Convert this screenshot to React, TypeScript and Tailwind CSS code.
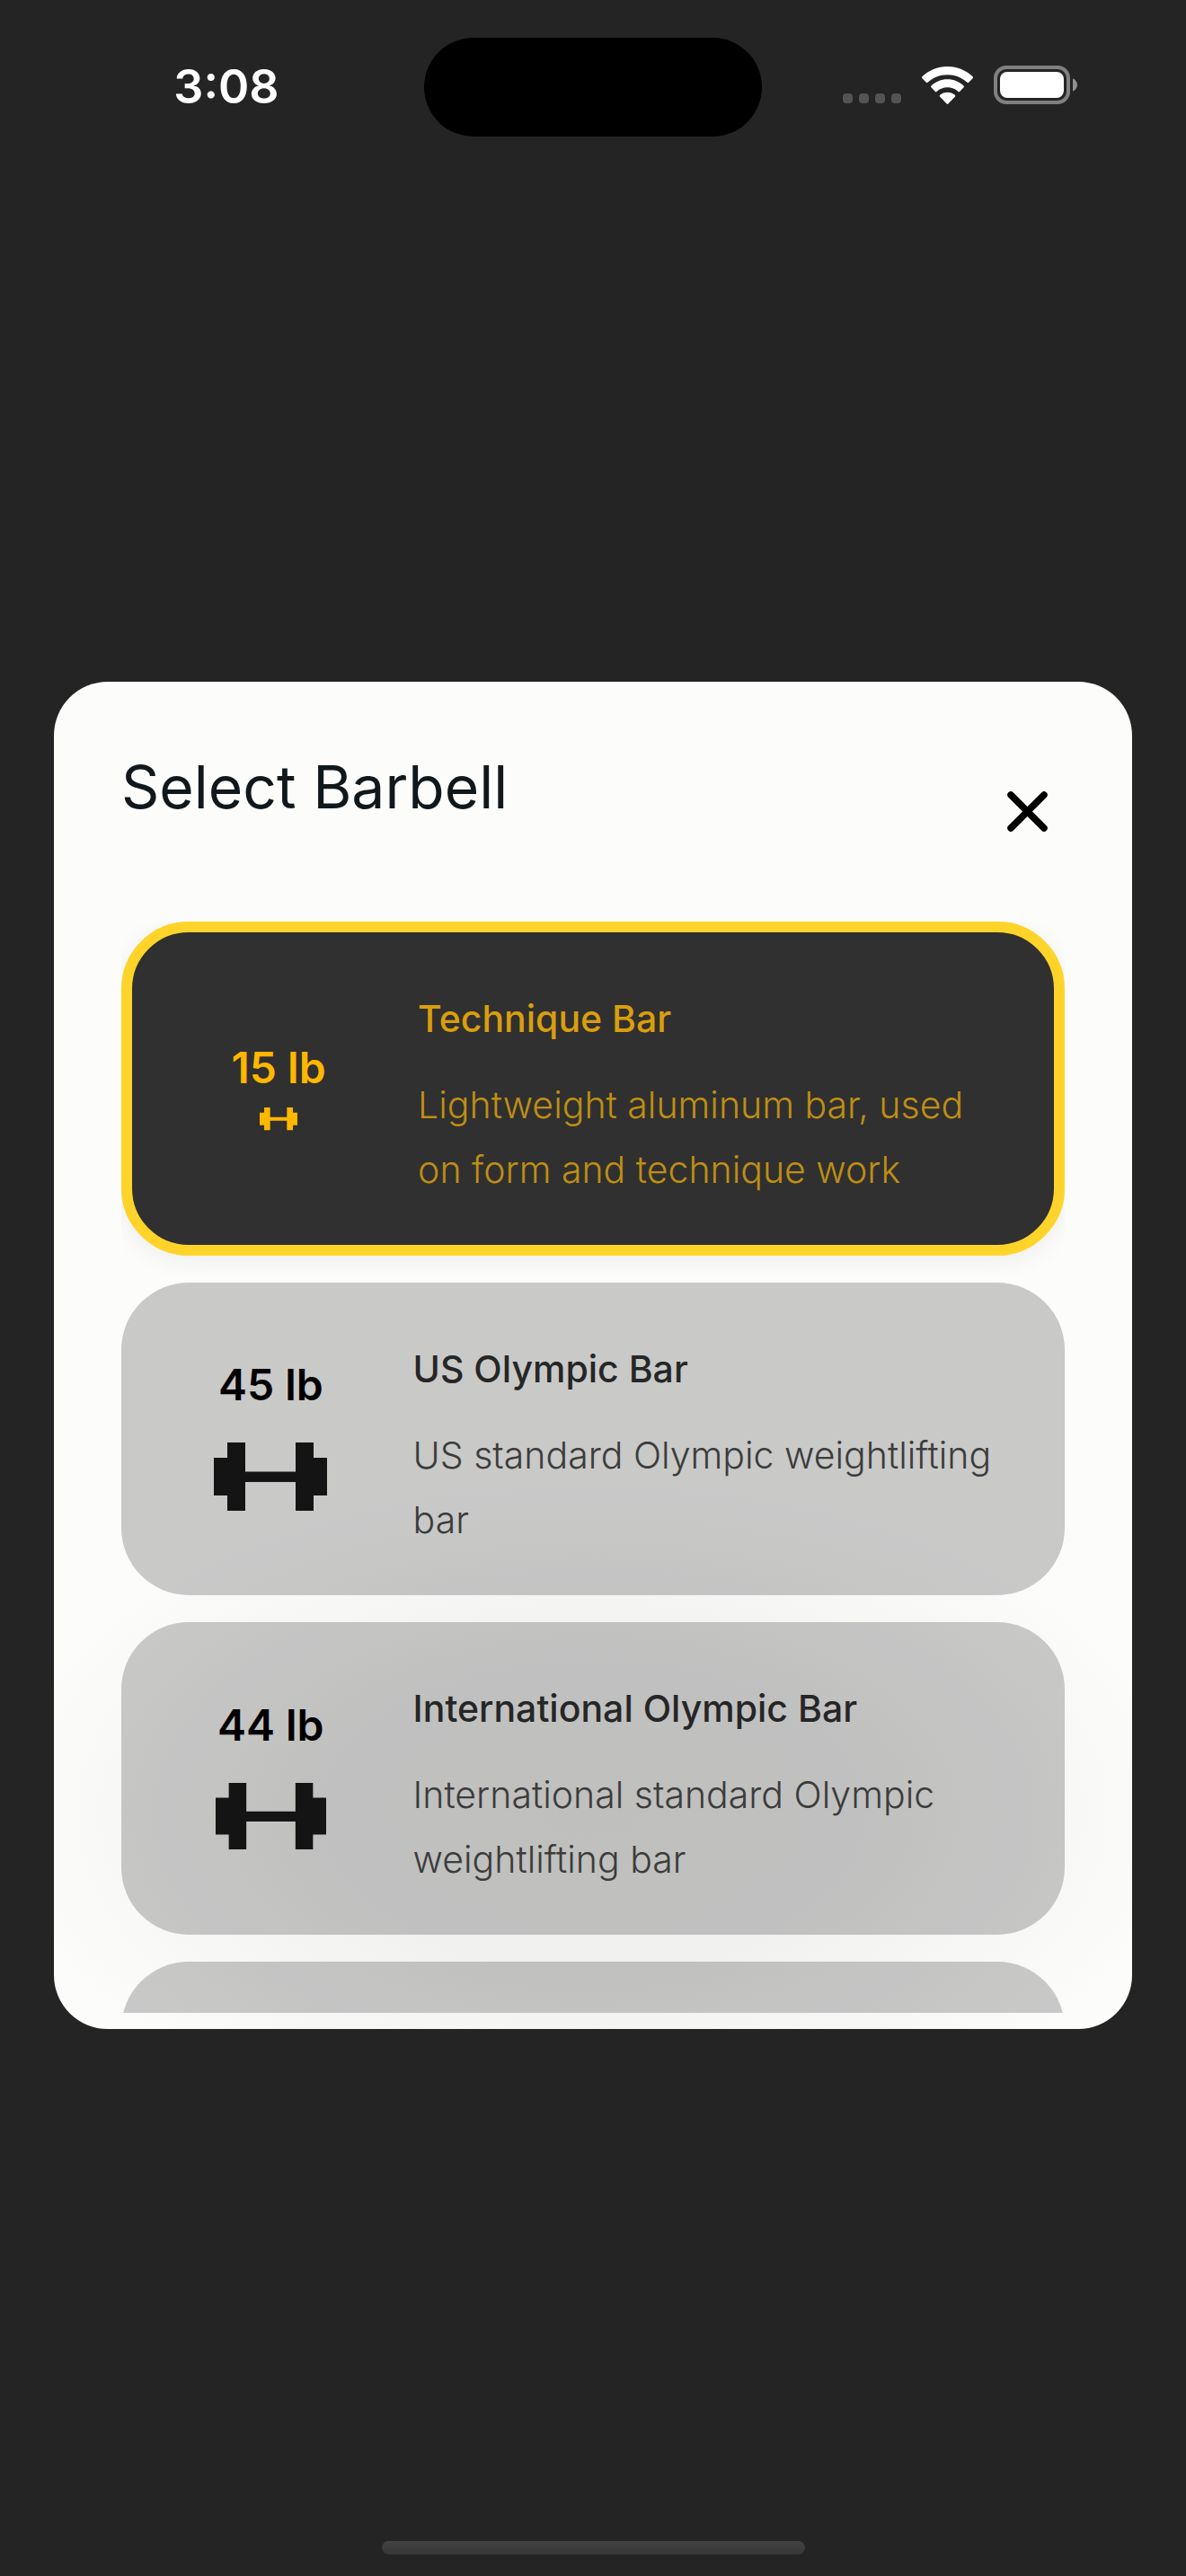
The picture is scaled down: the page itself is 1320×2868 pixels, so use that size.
import { useState } from "react";

type Barbell = {
  name: string;
  description: string;
  weight: number;
};

const barbells: Barbell[] = [
  {
    name: "Technique Bar",
    description: "Lightweight aluminum bar, used on form and technique work",
    weight: 15,
  },
  {
    name: "US Olympic Bar",
    description: "US standard Olympic weightlifting bar",
    weight: 45,
  },
  {
    name: "International Olympic Bar",
    description: "International standard Olympic weightlifting bar",
    weight: 44,
  },
];

function WifiIcon() {
  return (
    <svg width="57" height="42" viewBox="0 0 57 42" fill="#fff" aria-hidden="true">
      <path d="M28.5 0C39.4 0 49.3 4.3 56.6 11.3c.6.5.6 1.300 0 1.900l-4.400 4.600c-.5.5-1.200.5-1.700 0C44.700 12.500 37 9.200 28.500 9.200S12.300 12.500 6.500 17.800c-.5.5-1.200.5-1.700 0L.4 13.200c-.6-.6-.6-1.400 0-1.900C7.700 4.300 17.600 0 28.500 0Z" />
      <path d="M28.500 14.300c7 0 13.300 2.700 18 7.100.6.6.6 1.300.1 1.900l-4.500 4.600c-.5.6-1.200.6-1.700.1a17.600 17.600 0 0 0-23.800 0c-.5.5-1.200.5-1.700-.1l-4.500-4.600c-.5-.6-.5-1.300.1-1.900 4.700-4.400 11-7.100 18-7.100Z" />
      <path d="M28.500 28.800c3.200 0 6 1.100 8.300 3 .6.5.6 1.300.1 1.900l-7.600 7.900c-.5.5-1.100.5-1.600 0l-7.600-7.900c-.5-.6-.5-1.400.1-1.900 2.300-1.900 5.100-3 8.300-3Z" />
    </svg>
  );
}

function BatteryIcon() {
  return (
    <svg width="93" height="43" viewBox="0 0 93 43" aria-hidden="true">
      <rect x="2" y="2" width="81" height="39" rx="12" fill="none" stroke="#808080" strokeWidth="4" />
      <rect x="7" y="7" width="71" height="29" rx="8" fill="#fff" />
      <path d="M88 14.500c3 1 5 3.800 5 7s-2 6-5 7Z" fill="#919191" />
    </svg>
  );
}

function CloseIcon() {
  return (
    <svg width="45" height="45" viewBox="0 0 45 45" aria-hidden="true">
      <path d="M4 4L41 41M41 4L4 41" stroke="#000" strokeWidth="7.500" strokeLinecap="round" />
    </svg>
  );
}

function DumbbellIcon({ width }: { width: number }) {
  return (
    <svg width={width} viewBox="0 0 126 76" fill="currentColor" aria-hidden="true">
      <path d="M0 17H15V0H35V32.500H91V0H111V17H126V59H111V76H91V44H35V76H15V59H0Z" />
    </svg>
  );
}

function StatusBar() {
  return (
    <header className="grid h-[189px] shrink-0 grid-cols-[1fr_auto_1fr] items-center">
      <time className="pt-1 pl-8 text-center text-[52px] leading-none font-semibold text-white">
        3:08
      </time>
      <div className="mt-[5px] h-[110px] w-[376px] rounded-full bg-black" />
      <div className="flex items-center justify-center pr-8">
        <div className="mt-[30px] flex gap-[7px]">
          {[0, 1, 2, 3].map((dot) => (
            <span key={dot} className="size-[11px] rounded-[4px] bg-[#545454]" />
          ))}
        </div>
        <div className="ml-[23px] flex items-center gap-[23px]">
          <WifiIcon />
          <BatteryIcon />
        </div>
      </div>
    </header>
  );
}

function BarbellCard({
  barbell,
  selected,
  onSelect,
}: {
  barbell: Barbell;
  selected: boolean;
  onSelect: () => void;
}) {
  return (
    <button
      type="button"
      aria-pressed={selected}
      onClick={onSelect}
      className={
        "grid w-full grid-cols-[27%_1fr] items-center gap-x-[26px] rounded-[75px] pt-[60px] pr-9 pb-12 pl-[34px] text-left " +
        (selected
          ? "border-[12px] border-[#ffd42a] bg-[#303030] shadow-[0_6px_30px_rgba(0,0,0,0.06)]"
          : "bg-black/20")
      }
    >
      <span
        className={
          "-mt-3 flex flex-col items-center " + (selected ? "text-[#ffb700]" : "text-[#141414]")
        }
      >
        <span
          className={
            "text-[48px] leading-[72px] font-semibold " + (selected ? "text-[#ffb700]" : "text-black")
          }
        >
          {barbell.weight} lb
        </span>
        <span className={barbell.weight > 30 ? "pt-7 pb-4" : "pt-2 pb-3"}>
          <DumbbellIcon width={Math.round(barbell.weight * 2.8)} />
        </span>
      </span>
      <span className="flex flex-col gap-6 pr-6 text-[41px] leading-[72px]">
        <span className={"font-medium " + (selected ? "text-[#d99e0e]" : "text-[#262626]")}>
          {barbell.name}
        </span>
        <span className={"font-light " + (selected ? "text-[#bf8e14]" : "text-[#3c3c3b]")}>
          {barbell.description}
        </span>
      </span>
    </button>
  );
}

export default function App() {
  const [selected, setSelected] = useState(0);

  return (
    <div className="flex min-h-screen flex-col bg-[#242424] font-[Inter,sans-serif]">
      <StatusBar />
      <main className="flex flex-1 items-center px-[60px]">
        <section
          role="dialog"
          aria-labelledby="dialog-title"
          className="flex max-h-[1500px] w-full flex-col rounded-[60px] bg-[#fcfcfc] bg-[radial-gradient(ellipse_56%_25%_at_50%_84%,#efefee_0%,#f1f1f0_45%,#fcfcfb_100%)] px-[75px] pt-[75px] pb-[18px]"
        >
          <div className="flex items-start justify-between pb-[81px]">
            <h1 id="dialog-title" className="text-[66px] leading-[84px] text-[#11181c]">
              Select Barbell
            </h1>
            <button
              type="button"
              aria-label="Close"
              className="mt-[27px] flex size-[84px] items-center justify-center"
            >
              <CloseIcon />
            </button>
          </div>
          <ul className="flex min-h-0 flex-col gap-[30px] overflow-y-auto [scrollbar-width:none]">
            {barbells.map((barbell, index) => (
              <li key={barbell.name}>
                <BarbellCard
                  barbell={barbell}
                  selected={index === selected}
                  onSelect={() => setSelected(index)}
                />
              </li>
            ))}
            <li className="h-[348px] shrink-0 rounded-[75px] bg-black/20" />
          </ul>
        </section>
      </main>
      <footer className="flex shrink-0 justify-center pb-6">
        <div className="h-[15px] w-[471px] rounded-full bg-linear-to-b from-[#424242] to-[#383838]" />
      </footer>
    </div>
  );
}
